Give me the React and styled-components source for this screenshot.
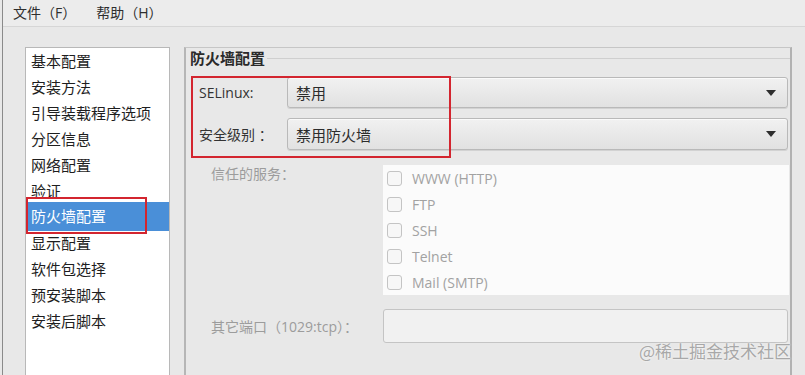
import React from "react";
import styled, { createGlobalStyle } from "styled-components";

const GlobalStyle = createGlobalStyle`
  html, body {
    margin: 0;
    padding: 0;
    background: #e8e8e8;
    overflow: hidden;
  }
  * {
    box-sizing: border-box;
  }
`;

const FONT = `"Open Sans", "Noto Sans CJK SC", sans-serif`;

const Window = styled.div`
  position: relative;
  width: 803px;
  height: 375px;
  margin-left: 2px;
  border-left: 1px solid #8a8a8a;
  background: #e8e8e8;
  font-family: ${FONT};
  color: #2e2e2e;
  overflow: hidden;
`;

const MenuBar = styled.div`
  height: 27px;
  display: flex;
  align-items: center;
  gap: 20px;
  padding-left: 10px;
  background: #ececec;
  border-bottom: 1px solid #d6d6d6;
  font-size: 14px;
`;

const MenuItem = styled.span`
  line-height: 26px;
`;

const Body = styled.div`
  display: flex;
  padding-top: 20px;
`;

const Sidebar = styled.ul`
  position: relative;
  list-style: none;
  margin: 0 0 0 22px;
  padding: 0;
  width: 145px;
  height: 340px;
  background: #fff;
  border: 1px solid #b8b8b8;
  font-size: 15px;
`;

const NavItem = styled.li`
  height: ${(p) => (p.$active ? "29px" : "26px")};
  margin: ${(p) => (p.$active ? "-2px 0 -1px" : "0")};
  line-height: 26px;
  padding-left: 5px;
  padding-top: ${(p) => (p.$active ? "1px" : "0")};
  color: ${(p) => (p.$active ? "#fff" : "#1e1e1e")};
  background: ${(p) => (p.$active ? "#4a8fd8" : "transparent")};
  white-space: nowrap;
`;

const Highlight = styled.div`
  position: absolute;
  border: 2px solid #d3252f;
  pointer-events: none;
`;

const Frame = styled.section`
  position: relative;
  margin-left: 14px;
  width: 608px;
  height: 340px;
  border-top: 1px solid #c6c6c6;
  border-left: 2px solid #b6b6b6;
  border-right: 2px solid #b2b2b2;
`;

const FrameHead = styled.div`
  display: flex;
  align-items: center;
  height: 20px;
  padding-left: 4px;
  gap: 2px;
  &::after {
    content: "";
    flex: 1;
    height: 1px;
    background: #cfcfcf;
  }
`;

const FrameTitle = styled.h3`
  margin: 0;
  font-size: 15px;
  font-weight: bold;
  color: #2a2a2a;
  line-height: 20px;
`;

const FrameContent = styled.div`
  display: flex;
  flex-direction: column;
  padding: 9px 0 0 13px;
`;

const Row = styled.div`
  display: flex;
  align-items: ${(p) => (p.$top ? "flex-start" : "center")};
  margin-top: ${(p) => p.$gap || 0}px;
`;

const Label = styled.span`
  width: ${(p) => p.$w}px;
  padding-left: ${(p) => p.$indent || 0}px;
  font-size: 14px;
  color: ${(p) => (p.$muted ? "#9c9c9c" : "#333")};
  white-space: nowrap;
  line-height: ${(p) => (p.$top ? "16px" : "normal")};
  margin-top: ${(p) => (p.$top ? "1px" : "0")};
`;

const Combo = styled.div`
  flex: 0 0 501px;
  height: ${(p) => p.$h}px;
  display: flex;
  align-items: center;
  justify-content: space-between;
  padding: 0 11px 0 8px;
  border: 1px solid #b9b9b9;
  border-radius: 3px;
  background: linear-gradient(#f1f1f1, #e1e1e1);
  box-shadow: inset 0 1px 0 #fafafa, 0 1px 0 #d2d2d2;
  font-size: 15px;
  color: #2c2c2c;
`;

const Arrow = styled.span`
  width: 0;
  height: 0;
  border-left: 5px solid transparent;
  border-right: 5px solid transparent;
  border-top: 6px solid #2e2e2e;
`;

const CheckList = styled.div`
  width: 406px;
  height: 130px;
  background: #fbfbfb;
  display: flex;
  flex-direction: column;
`;

const CheckRow = styled.label`
  display: flex;
  align-items: center;
  gap: 10px;
  height: 26px;
  padding-left: 4px;
  font-size: 14px;
  color: #a2a2a2;
`;

const Box = styled.span`
  width: 15px;
  height: 15px;
  border: 1px solid #c4c4c4;
  border-radius: 3px;
  background: #f7f7f7;
`;

const TextInput = styled.div`
  width: 405px;
  height: 34px;
  border: 1px solid #c4c4c4;
  border-radius: 3px;
  background: #f1f1f1;
`;

const Watermark = styled.div`
  position: absolute;
  right: 14px;
  bottom: 12px;
  font-size: 17px;
  font-family: "Noto Sans CJK SC", sans-serif;
  color: #a8a8a8;
  text-shadow: 0 0 2px #fff;
`;

const navItems = [
  "基本配置",
  "安装方法",
  "引导装载程序选项",
  "分区信息",
  "网络配置",
  "验证",
  "防火墙配置",
  "显示配置",
  "软件包选择",
  "预安装脚本",
  "安装后脚本",
];

const services = ["WWW (HTTP)", "FTP", "SSH", "Telnet", "Mail (SMTP)"];

export default function App() {
  return (
    <Window>
      <GlobalStyle />
      <MenuBar>
        <MenuItem>文件（F）</MenuItem>
        <MenuItem>帮助（H）</MenuItem>
      </MenuBar>
      <Body>
        <Sidebar>
          {navItems.map((item) => (
            <NavItem key={item} $active={item === "防火墙配置"}>
              {item}
            </NavItem>
          ))}
          <Highlight style={{ left: 0, top: 149, width: 121, height: 37 }} />
        </Sidebar>
        <Frame>
          <FrameHead>
            <FrameTitle>防火墙配置</FrameTitle>
          </FrameHead>
          <FrameContent>
            <Row>
              <Label $w={88}>SELinux:</Label>
              <Combo $h={31}>
                <span>禁用</span>
                <Arrow />
              </Combo>
            </Row>
            <Row $gap={10}>
              <Label $w={88}>安全级别 ：</Label>
              <Combo $h={32}>
                <span>禁用防火墙</span>
                <Arrow />
              </Combo>
            </Row>
            <Row $gap={15} $top>
              <Label $w={184} $indent={12} $muted $top>
                信任的服务：
              </Label>
              <CheckList>
                {services.map((s) => (
                  <CheckRow key={s}>
                    <Box />
                    {s}
                  </CheckRow>
                ))}
              </CheckList>
            </Row>
            <Row $gap={14}>
              <Label $w={184} $indent={12} $muted>
                其它端口（1029:tcp）：
              </Label>
              <TextInput />
            </Row>
          </FrameContent>
          <Highlight style={{ left: 5, top: 28, width: 260, height: 82 }} />
        </Frame>
      </Body>
      <Watermark>@稀土掘金技术社区</Watermark>
    </Window>
  );
}
